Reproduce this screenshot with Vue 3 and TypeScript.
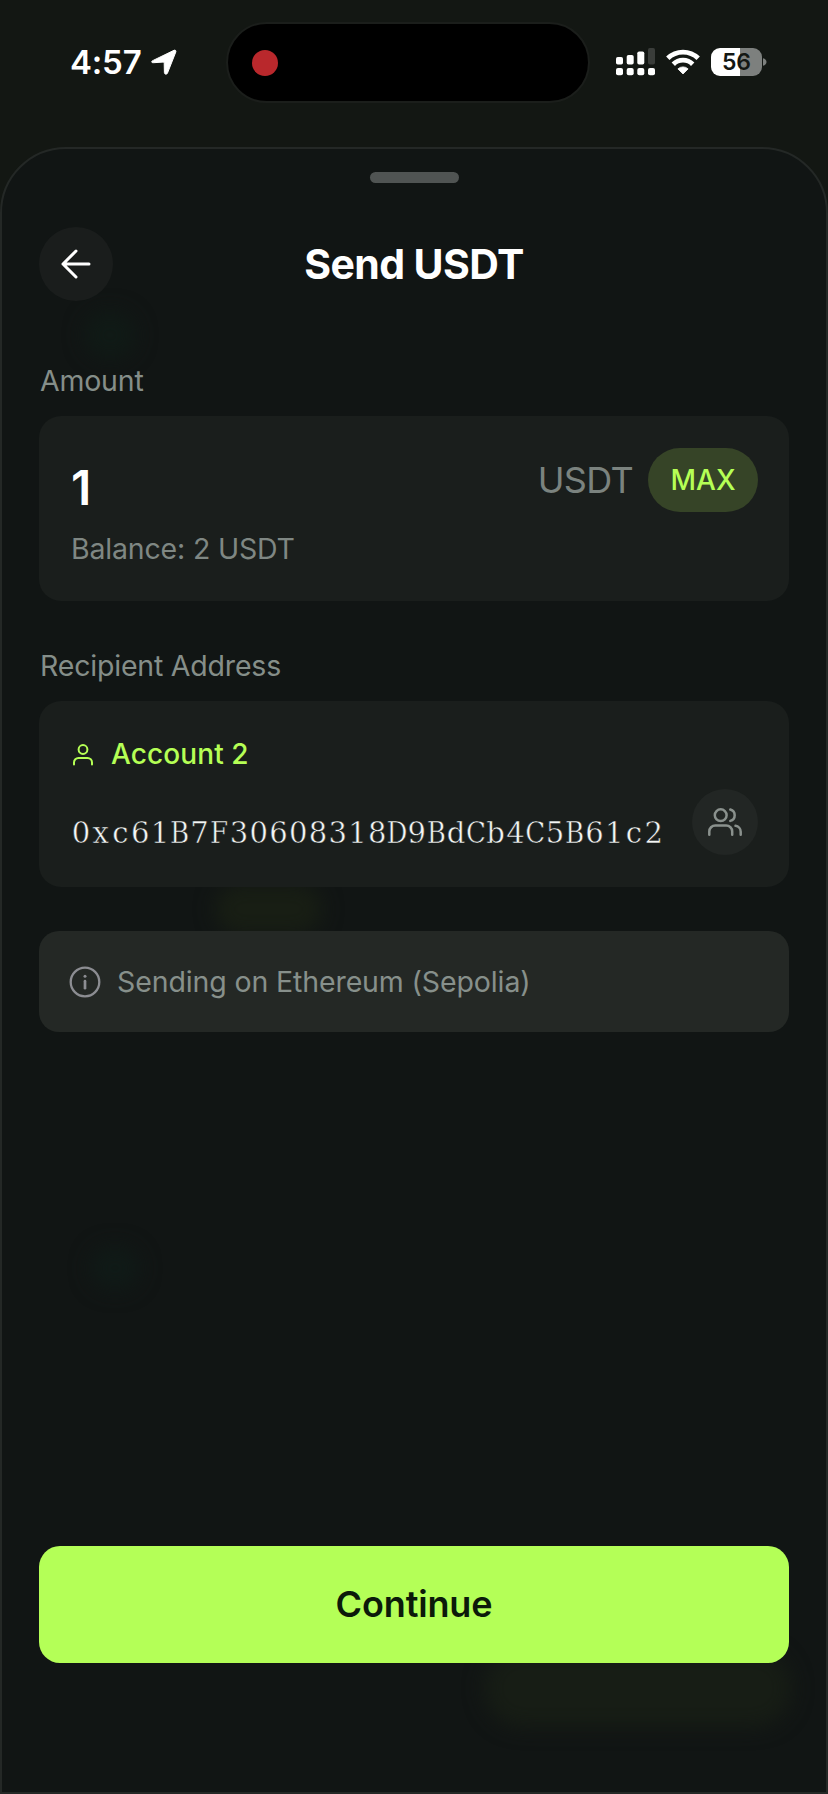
<script setup lang="ts">
import { ref } from 'vue'

const amount = ref<string>('1')
const balance = ref<number>(2)
const token = ref<string>('USDT')
const address = ref<string>('0xc61B7F30608318D9BdCb4C5B61c2')

// Capitals use a narrower face so that every character fits its cell.
const isCapital = (ch: string): boolean => /[A-Z]/.test(ch)
</script>

<template>
  <div class="screen">
    <header class="status">
      <div class="clock">
        <span class="time">4:57</span>
        <svg class="location" viewBox="0 0 26 26"><path d="M2.2 11.4 23 1.3c1.3-.6 2.3.4 1.8 1.700L16.500 24c-.7 1.800-3 1.500-3.100-.4L13.200 14.200c0-.8-.3-1.100-1.100-1.100L2.500 13.700C.3 13.800 0 12.300 2.200 11.400Z" fill="#fff" stroke="#fff" stroke-width="1" stroke-linejoin="round" /></svg>
      </div>
      <div class="island"><span class="record"></span></div>
      <div class="indicators">
        <svg class="signal" viewBox="0 0 39 28" fill="#fff">
          <rect x="0" y="9" width="7" height="7.500" rx="1.800" />
          <rect x="10.700" y="7" width="7" height="9.500" rx="1.800" />
          <rect x="21.300" y="3.500" width="7" height="13" rx="1.800" />
          <rect x="32" y="0" width="7" height="16.500" rx="1.800" fill="#3a3d3a" />
          <rect x="0" y="20" width="7" height="7.300" rx="2" />
          <rect x="10.700" y="20" width="7" height="7.300" rx="2" />
          <rect x="21.300" y="20" width="7" height="7.300" rx="2" />
          <rect x="32" y="20" width="7" height="7.300" rx="2" />
        </svg>
        <svg class="wifi" viewBox="0 0 34 26">
          <g fill="none" stroke="#fff" stroke-width="4.800">
            <path d="M1.800 9.300a21.700 21.700 0 0 1 30.400 0" />
            <path d="M7.300 15.200a13.800 13.800 0 0 1 19.400 0" />
          </g>
          <path d="M11.900 19.900a7.500 7.500 0 0 1 10.200 0L17 25Z" fill="#fff" stroke="#fff" stroke-width=".8" stroke-linejoin="round" />
        </svg>
        <div class="battery"><span>56</span></div>
        <svg class="nub" viewBox="0 0 5 10"><path d="M0 1.200c2.300.6 3.500 2 3.500 3.800S2.300 8.200 0 8.800Z" fill="#7d807e" /></svg>
      </div>
    </header>

    <main class="sheet">
      <div class="glow glow-logo"></div>
      <div class="glow glow-middle"></div>
      <div class="glow glow-token"></div>
      <div class="glow glow-bottom"></div>
      <div class="handle"></div>
      <div class="title-row">
        <button class="back" aria-label="Back">
          <svg viewBox="0 0 30 30"><path d="M28 15H2M15 2 2 15l13 13" fill="none" stroke="#fff" stroke-width="3" stroke-linecap="round" stroke-linejoin="round" /></svg>
        </button>
        <h1><span>Send {{ token }}</span></h1>
      </div>

      <div class="label">Amount</div>
      <section class="card">
        <div class="amount-row">
          <span class="amount">{{ amount }}</span>
          <div class="unit">
            <span class="token">{{ token }}</span>
            <button class="max"><span>MAX</span></button>
          </div>
        </div>
        <div class="balance"><span>Balance: {{ balance }} {{ token }}</span></div>
      </section>

      <div class="label second">Recipient Address</div>
      <section class="card">
        <div class="account">
          <svg viewBox="0 0 20 22"><g fill="none" stroke="#b5ff55" stroke-width="2" stroke-linecap="round"><circle cx="10" cy="5.500" r="4.400" /><path d="M1 20.500v-2a4.500 4.500 0 0 1 4.500-4.500h9a4.500 4.500 0 0 1 4.500 4.500v2" /></g></svg>
          <span>Account 2</span>
        </div>
        <div class="address-row">
          <div class="address"><span v-for="(ch, i) in address" :key="i" :class="{ capital: isCapital(ch) }">{{ ch }}</span></div>
          <button class="contacts" aria-label="Contacts">
            <svg viewBox="0 0 34 28"><g fill="none" stroke="#8a918d" stroke-width="2.500" stroke-linecap="round" stroke-linejoin="round"><circle cx="12.700" cy="7.200" r="5.900" /><path d="M1.300 26.700v-3.200a6 6 0 0 1 6-6h10.900a6 6 0 0 1 6 6v3.200" /><path d="M22.300 1.500a5.900 5.900 0 0 1 0 11.400" /><path d="M27.500 17.800a6 6 0 0 1 5.200 5.900v3" /></g></svg>
          </button>
        </div>
      </section>

      <section class="notice">
        <svg viewBox="0 0 32 32"><circle cx="16" cy="16" r="14.300" fill="none" stroke="#8c8d92" stroke-width="2.300" /><path d="M16 15.200v7" stroke="#8c8d92" stroke-width="2.700" stroke-linecap="round" /><circle cx="16" cy="10.200" r="1.500" fill="#8c8d92" /></svg>
        <span>Sending on Ethereum (Sepolia)</span>
      </section>

      <button class="continue"><span>Continue</span></button>
    </main>
  </div>
</template>

<style>
body {
  margin: 0;
  background: #131713;
}
</style>

<style scoped>
.screen {
  width: 828px;
  height: 1794px;
  overflow: hidden;
  display: flex;
  flex-direction: column;
  background: #131713;
  color: #fff;
  font-family: Inter, "Liberation Sans", sans-serif;
}
.screen *,
.screen {
  box-sizing: border-box;
}
button {
  border: 0;
  padding: 0;
  font: inherit;
  color: inherit;
}
svg {
  display: block;
  flex: none;
}
span {
  white-space: nowrap;
}
.status {
  height: 147px;
  flex: none;
  display: flex;
  align-items: flex-start;
  padding-top: 22px;
}
.clock {
  width: 226px;
  height: 80px;
  padding-left: 70px;
  display: flex;
  align-items: center;
  gap: 9px;
}
.time {
  width: 72px;
  font-size: 33px;
  font-weight: 600;
  line-height: 80px;
  letter-spacing: -0.2px;
}
.location {
  width: 26px;
  height: 26px;
}
.island {
  width: 364px;
  height: 81px;
  border: 2px solid #1b1e1b;
  border-radius: 41px;
  background: #000;
  display: flex;
  align-items: center;
  padding-left: 24px;
}
.record {
  width: 26px;
  height: 26px;
  border-radius: 50%;
  background: #b9282c;
}
.indicators {
  height: 80px;
  display: flex;
  align-items: center;
  padding-left: 26px;
}
.signal {
  width: 39px;
  height: 28px;
}
.wifi {
  width: 34px;
  height: 26px;
  margin-left: 11px;
}
.battery {
  width: 51px;
  height: 28px;
  margin-left: 11px;
  border-radius: 9px;
  background: linear-gradient(90deg, #fff 56%, #7d807e 56%);
  color: #131713;
  text-align: center;
  font-size: 23px;
  font-weight: 600;
  line-height: 28px;
}
.nub {
  width: 5px;
  height: 10px;
  margin-left: 1px;
}
.sheet {
  position: relative;
  flex: 1;
  overflow: hidden;
  display: flex;
  flex-direction: column;
  padding: 23px 37px 0;
  border: 2px solid #242826;
  border-radius: 66px 66px 0 0;
  background: #111514;
}
.sheet > * {
  flex: none;
}
.sheet > :not(.glow) {
  position: relative;
}
.glow {
  position: absolute;
  border-radius: 40px;
  filter: blur(10px);
}
.glow-logo {
  left: 82px;
  top: 162px;
  width: 52px;
  height: 48px;
  background: #101a16;
}
.glow-middle {
  left: 213px;
  top: 735px;
  width: 107px;
  height: 50px;
  background: #181e14;
}
.glow-token {
  left: 88px;
  top: 1097px;
  width: 50px;
  height: 44px;
  background: #101a17;
}
.glow-bottom {
  left: 482px;
  top: 1500px;
  width: 308px;
  height: 78px;
  background: #171d15;
}
.handle {
  align-self: center;
  width: 89px;
  height: 11px;
  border-radius: 6px;
  background: #505453;
}
.title-row {
  height: 74px;
  margin-top: 44px;
  display: flex;
  align-items: center;
}
.back {
  width: 74px;
  height: 74px;
  border-radius: 50%;
  background: #1a1d1c;
  display: flex;
  align-items: center;
  justify-content: center;
}
.back svg {
  width: 30px;
  height: 30px;
}
h1 {
  flex: 1;
  margin: 0;
  padding-right: 74px;
  text-align: center;
  font-size: 41px;
  font-weight: 700;
  line-height: 74px;
  letter-spacing: -0.6px;
}
.label {
  margin-top: 60px;
  height: 40px;
  padding-left: 1px;
  font-size: 28.500px;
  line-height: 40px;
  letter-spacing: -0.2px;
  color: #858e89;
}
.label.second {
  margin-top: 45px;
  margin-bottom: -1px;
}
.card {
  margin-top: 15px;
  padding: 32px 31px 0 32px;
  border-radius: 22px;
  background: #1a1e1c;
  height: 185px;
}
.label.second + .card {
  margin-top: 16px;
  height: 186px;
}
.amount-row {
  height: 79px;
  display: flex;
  align-items: flex-start;
  justify-content: space-between;
}
.amount {
  font-size: 48px;
  font-weight: 600;
  line-height: 79px;
}
.unit {
  display: flex;
  align-items: center;
  gap: 15px;
}
.token {
  font-size: 36px;
  line-height: 64px;
  letter-spacing: -0.7px;
  color: #7b837f;
}
.max {
  width: 110px;
  height: 64px;
  border-radius: 32px;
  background: #364427;
  color: #b5ff55;
  font-size: 28px;
  font-weight: 500;
}
.balance {
  font-size: 28.500px;
  line-height: 43px;
  letter-spacing: -0.18px;
  color: #7f8783;
}
.account {
  height: 43px;
  display: flex;
  align-items: center;
  padding-left: 2px;
  gap: 18px;
  font-size: 28px;
  font-weight: 500;
  line-height: 43px;
  letter-spacing: 0.1px;
  color: #b5ff55;
}
.account svg {
  width: 20px;
  height: 22px;
}
.address-row {
  height: 66px;
  margin-top: 13px;
  display: flex;
  justify-content: space-between;
}
.address {
  display: flex;
  padding-top: 24px;
  font-family: "DejaVu Serif", serif;
  font-size: 29px;
  line-height: 40px;
  color: #f4f6f5;
  -webkit-text-stroke: 0.5px #1a1e1c;
}
.address span {
  width: 19.750px;
  display: flex;
  justify-content: center;
}
.address .capital {
  font-family: "DejaVu Serif Condensed", "DejaVu Serif", serif;
  font-stretch: condensed;
}
.contacts {
  width: 66px;
  height: 66px;
  border-radius: 50%;
  background: #222624;
  display: flex;
  align-items: center;
  justify-content: center;
}
.contacts svg {
  width: 34px;
  height: 28px;
}
.notice {
  height: 101px;
  margin-top: 44px;
  padding-left: 30px;
  border-radius: 20px;
  background: #242825;
  display: flex;
  align-items: center;
  gap: 16px;
  font-size: 28.500px;
  letter-spacing: -0.12px;
  color: #87908b;
}
.notice svg {
  width: 32px;
  height: 32px;
}
.continue {
  height: 117px;
  margin-top: 514px;
  border-radius: 21px;
  background: #b4ff57;
  color: #0c1a0a;
  font-size: 36px;
  font-weight: 600;
  line-height: 117px;
  letter-spacing: -0.15px;
}
</style>
